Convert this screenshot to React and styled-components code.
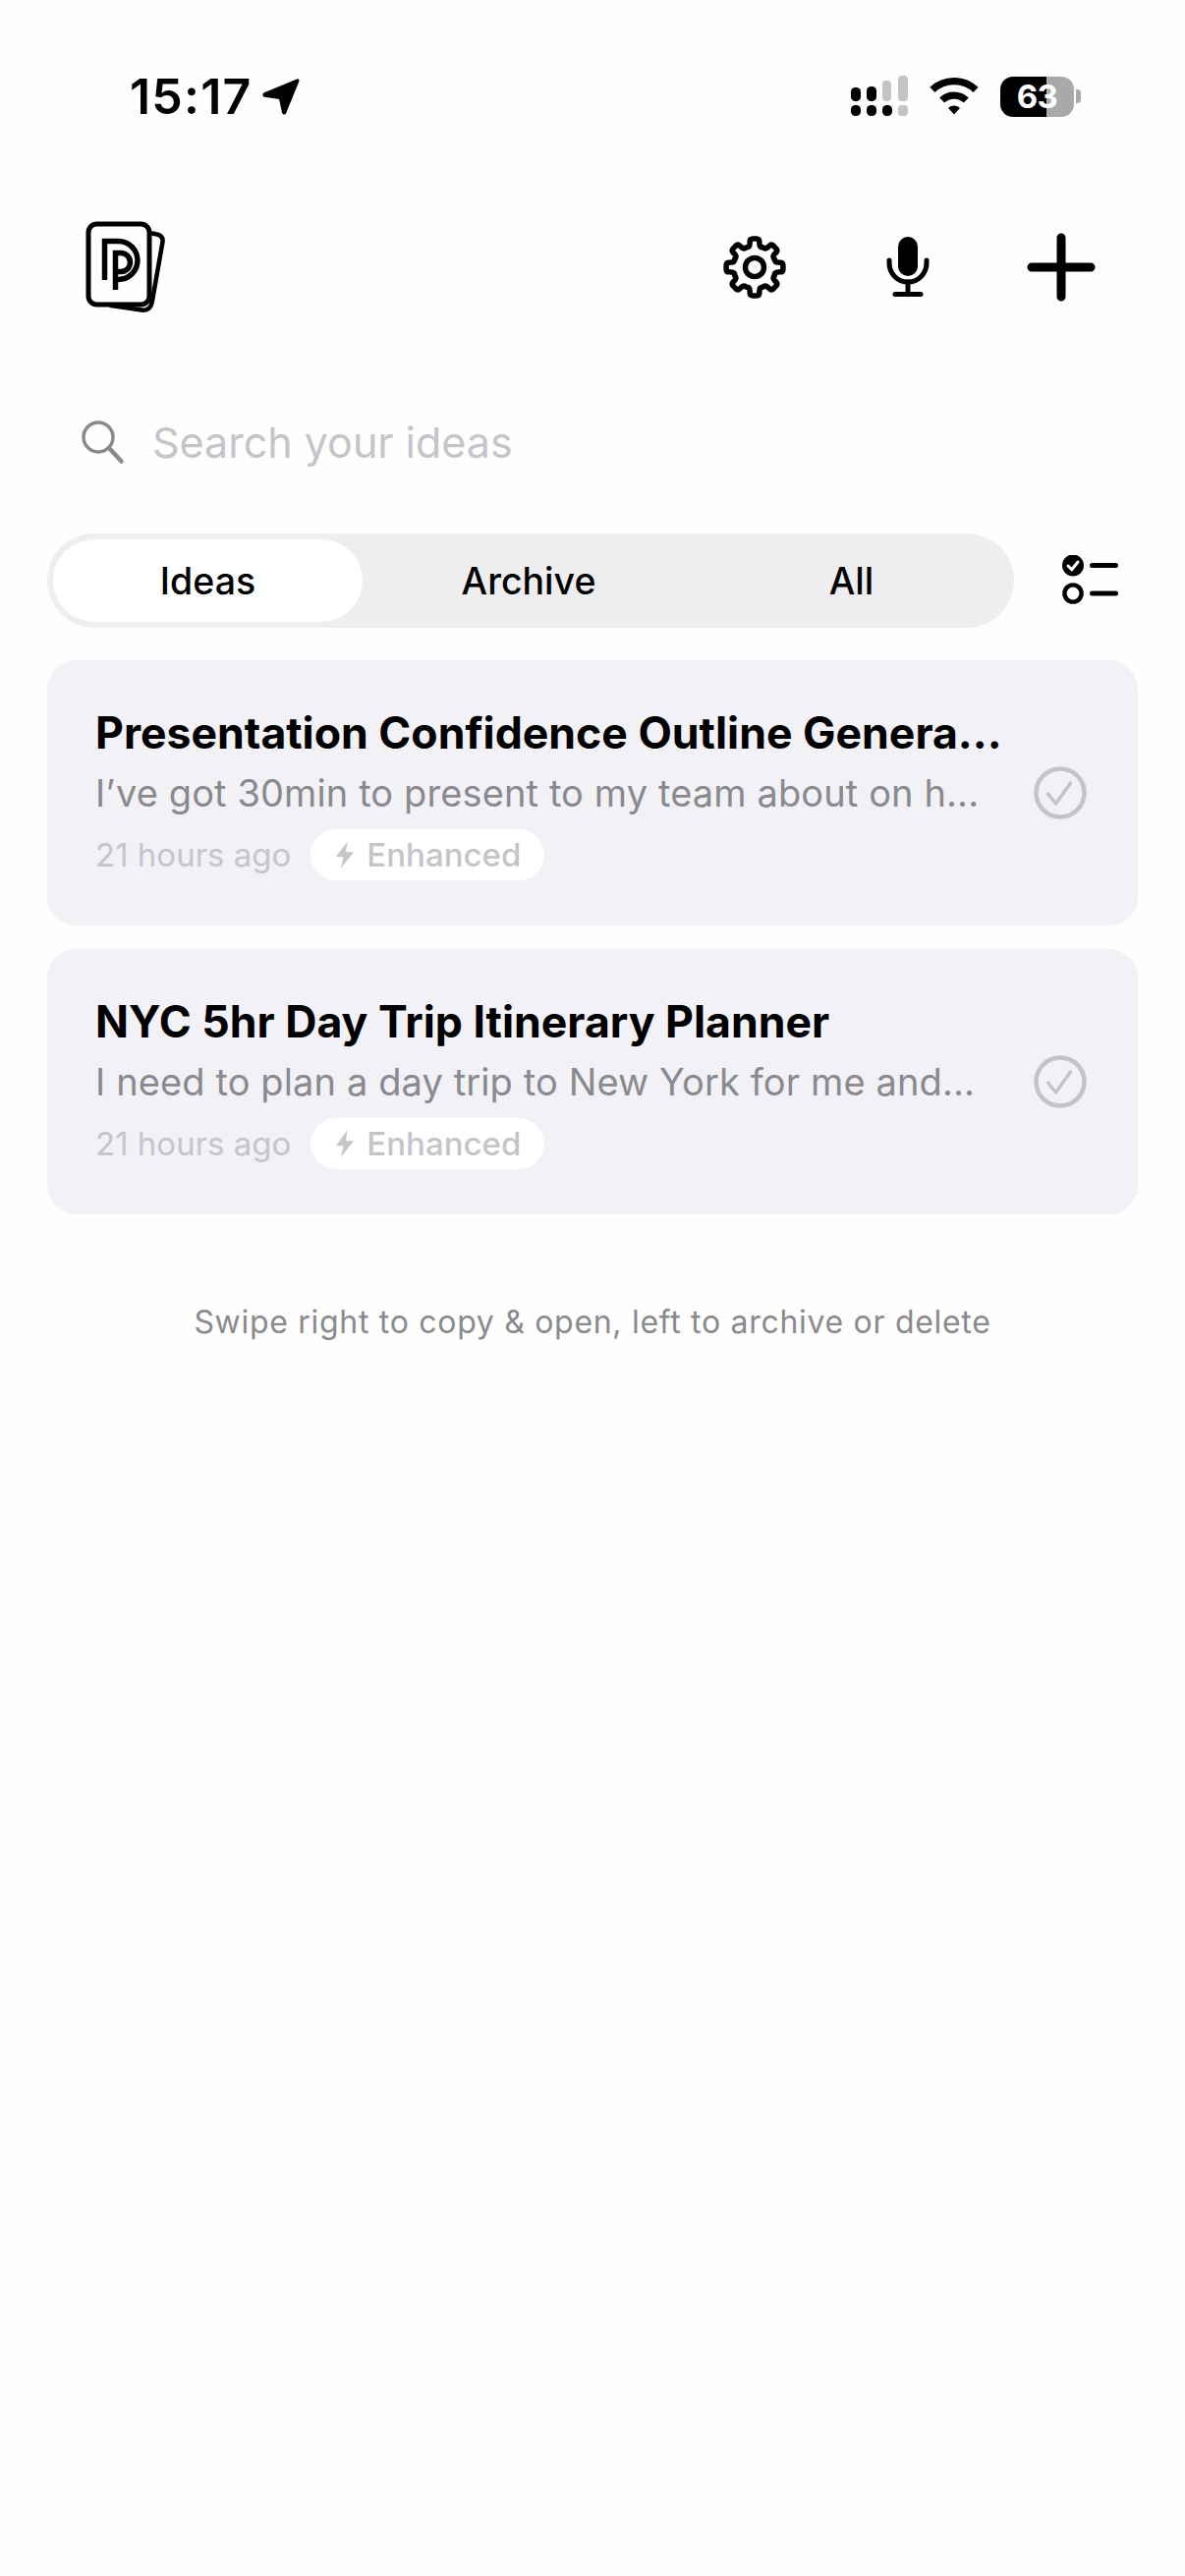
import React from 'react'
import styled, { createGlobalStyle } from 'styled-components'

const GlobalStyle = createGlobalStyle`
  html, body { margin: 0; padding: 0; background: #fff; }
  body { font-family: Inter, "Liberation Sans", sans-serif; -webkit-font-smoothing: antialiased; }
`

const Page = styled.div`
  width: 1206px;
  height: 2622px;
  background: #fefefe;
  overflow: hidden;
  display: flex;
  flex-direction: column;
`

const StatusBar = styled.div`
  height: 78px;
  padding: 59px 106px 0 132px;
  display: flex;
  align-items: center;
  justify-content: space-between;
`
const TimeGroup = styled.div`
  display: flex;
  align-items: center;
  gap: 10px;
`
const Time = styled.span`
  font-size: 50px;
  line-height: 60px;
  font-weight: 600;
  letter-spacing: 1.2px;
  color: #000;
`
const StatusIcons = styled.div`
  display: flex;
  align-items: center;
  gap: 22px;
`
const Battery = styled.div`
  width: 75px;
  height: 41px;
  border-radius: 13px;
  overflow: hidden;
  background: linear-gradient(90deg, #000 0 63%, #a9a9a9 63% 100%);
  display: flex;
  align-items: center;
  justify-content: center;
  color: #fff;
  font-size: 33px;
  font-weight: 700;
  letter-spacing: -0.5px;
`
const BatteryWrap = styled.div`
  display: flex;
  align-items: center;
  gap: 2px;
`
const BatteryCap = styled.div`
  width: 5px;
  height: 14px;
  border-radius: 0 4px 4px 0;
  background: #a9a9a9;
`

const Header = styled.div`
  margin-top: 87px;
  height: 96px;
  padding: 0 91px 0 87px;
  display: flex;
  align-items: center;
`
const HeaderActions = styled.div`
  margin-left: auto;
  display: flex;
  align-items: center;
  gap: 90px;
`
const IconSlot = styled.div`
  width: ${p => p.$w}px;
  height: 72px;
  display: flex;
  align-items: center;
  justify-content: center;
`

const SearchRow = styled.div`
  margin-top: 98px;
  height: 64px;
  padding-left: 82px;
  display: flex;
  align-items: center;
  gap: 27px;
`
const SearchText = styled.div`
  font-size: 43px;
  line-height: 64px;
  color: #c5c5c9;
`

const FilterRow = styled.div`
  margin-top: 61px;
  padding: 0 67px 0 48px;
  display: flex;
  align-items: center;
  justify-content: space-between;
`
const Segments = styled.div`
  width: 984px;
  height: 96px;
  box-sizing: border-box;
  padding: 6px;
  border-radius: 48px;
  background: #eeeef0;
  display: grid;
  grid-template-columns: 315px 338px 1fr;
`
const Segment = styled.div`
  border-radius: 42px;
  background: ${p => (p.$active ? '#fff' : 'transparent')};
  display: flex;
  align-items: center;
  justify-content: center;
  font-size: 37.5px;
  font-weight: 500;
  color: #000;
`

const List = styled.div`
  margin: 33px 48px 0;
  display: flex;
  flex-direction: column;
  gap: 24px;
`
const Card = styled.div`
  height: 270px;
  box-sizing: border-box;
  padding: 47px 52px 0 49px;
  border-radius: 30px;
  background: #f1f1f6;
  box-shadow: 0 0 2px rgba(0, 0, 0, 0.04);
  display: flex;
  align-items: flex-start;
  justify-content: space-between;
`
const CardBody = styled.div`
  width: 930px;
  display: flex;
  flex-direction: column;
`
const Title = styled.div`
  font-size: 44.6px;
  line-height: 54px;
  font-weight: 700;
  color: #000;
  white-space: nowrap;
`
const Preview = styled.div`
  margin-top: 7px;
  font-size: 38px;
  line-height: 54px;
  letter-spacing: 0.12px;
  color: #8a8a8e;
  white-space: nowrap;
`
const Meta = styled.div`
  margin-top: 10px;
  display: flex;
  align-items: center;
  gap: 20px;
`
const Ago = styled.span`
  font-size: 33px;
  line-height: 52px;
  color: #c5c5c9;
`
const Badge = styled.span`
  height: 52px;
  padding: 0 24px 0 25px;
  border-radius: 26px;
  background: #fff;
  display: inline-flex;
  align-items: center;
  gap: 12px;
  font-size: 33px;
  font-weight: 500;
  color: #c5c5c9;
`
const Check = styled.div`
  margin-top: 61px;
  display: flex;
`
const Hint = styled.div`
  margin-top: 88px;
  text-align: center;
  font-size: 32px;
  line-height: 44px;
  letter-spacing: 0.7px;
  color: #8a8a8e;
`

const LocationArrow = () => (
  <svg width="40" height="42" viewBox="0 0 42 42">
    <path d="M38 2.500c1.600-.6 2.900.7 2.300 2.400L26.500 38.800c-1 2.500-3.900 2.200-4.500-.4l-3-14.200-15.400-2.500C1 21 .7 18 3 17z" fill="#000" />
  </svg>
)

const Signal = () => (
  <svg width="58" height="42" viewBox="0 0 58 42">
    <g fill="#000">
      <rect x="0" y="12" width="10" height="14" rx="4.500" />
      <rect x="16" y="11" width="10" height="15" rx="4.500" />
      <rect x="0" y="30" width="10" height="11" rx="4.500" />
      <rect x="16" y="30" width="10" height="11" rx="4.500" />
      <rect x="32" y="30" width="10" height="11" rx="4.500" />
    </g>
    <g fill="#c4c4c4">
      <rect x="32" y="5" width="9" height="21" rx="4" />
      <rect x="48" y="0" width="10" height="26" rx="4" />
      <rect x="48" y="30" width="10" height="11" rx="4" />
    </g>
  </svg>
)

const Wifi = () => (
  <svg width="50" height="38" viewBox="0 0 50 38">
    <path d="M25 0c9.500 0 18.200 3.700 24.600 9.800l-5 5.300A28 28 0 0 0 25 7.300 28 28 0 0 0 5.400 15.100l-5-5.300A35.500 35.500 0 0 1 25 0z" fill="#000" />
    <path d="M25 14.500c5.700 0 10.900 2.200 14.800 5.900l-5 5.200A14 14 0 0 0 25 21.700a14 14 0 0 0-9.800 3.900l-5-5.200A21.300 21.300 0 0 1 25 14.500z" fill="#000" />
    <path d="M25 28.500c2.300 0 4.400.9 6 2.400L25 37.500l-6-6.600a8.700 8.700 0 0 1 6-2.400z" fill="#000" />
  </svg>
)

const Logo = () => (
  <svg width="82" height="94" viewBox="0 0 82 94" fill="none" stroke="#000">
    <path d="M68 12.500l3.500 .7c5 .8 7.500 3.500 7 8L68 81c-1 7-4.500 10.500-11 9.500L26 86" strokeWidth="4.500" strokeLinecap="round" />
    <rect x="3" y="3" width="62" height="82" rx="8.500" strokeWidth="5" />
    <path d="M19.500 18V60M17 20.500H33.500a19.500 19.500 0 0 1 0 39H31" strokeWidth="5.500" />
    <path d="M30.500 70V32.500H36a9.500 9.500 0 0 1 0 19H30.500" strokeWidth="5.500" />
  </svg>
)

// eight blunt teeth, one pointing straight up, valleys curved
const gearPath = () => {
  const pt = (r, deg) => {
    const a = ((deg - 90) * Math.PI) / 180
    return `${(33 + r * Math.cos(a)).toFixed(2)} ${(33 + r * Math.sin(a)).toFixed(2)}`
  }
  let d = `M${pt(22, -22.5)}`
  for (let i = 0; i < 8; i++) {
    const c = i * 45
    d += `Q${pt(20.5, c - 14)} ${pt(24.5, c - 11.5)}`
    d += `L${pt(26.5, c - 10.5)}Q${pt(29, c - 9.5)} ${pt(29, c - 5)}`
    d += `L${pt(29, c + 5)}Q${pt(29, c + 9.5)} ${pt(26.5, c + 10.5)}`
    d += `L${pt(24.5, c + 11.5)}Q${pt(20.5, c + 14)} ${pt(22, c + 22.5)}`
  }
  return d + 'Z'
}

const Gear = () => (
  <svg width="66" height="66" viewBox="0 0 66 66" fill="none" stroke="#000" strokeWidth="5.500" strokeLinejoin="round">
    <circle cx="33" cy="33" r="9.500" />
    <path d={gearPath()} />
  </svg>
)

const Mic = () => (
  <svg width="44" height="62" viewBox="0 0 44 62" fill="none" stroke="#000" strokeLinecap="round">
    <rect x="12" y="0" width="20" height="40" rx="10" fill="#000" stroke="none" />
    <path d="M3 24v3a19 19 0 0 0 38 0v-3" strokeWidth="5" />
    <path d="M22 46v12M9 58.500h26" strokeWidth="5" />
  </svg>
)

const Plus = () => (
  <svg width="70" height="70" viewBox="0 0 70 70">
    <path d="M35 5v60M5 35h60" stroke="#000" strokeWidth="9" strokeLinecap="round" />
  </svg>
)

const SearchIcon = () => (
  <svg width="46" height="46" viewBox="0 0 46 46" fill="none" stroke="#8a8a8e" strokeLinecap="round">
    <circle cx="18" cy="18" r="15" strokeWidth="3.500" />
    <path d="M29 29l12.500 13.500" strokeWidth="4.500" />
  </svg>
)

const ListCheck = () => (
  <svg width="60" height="52" viewBox="0 0 60 52">
    <circle cx="13" cy="10.500" r="11" fill="#000" />
    <path d="M8 11l3.800 3.800L18 7" fill="none" stroke="#fff" strokeWidth="3" strokeLinecap="round" strokeLinejoin="round" />
    <circle cx="13" cy="39" r="8.600" fill="none" stroke="#000" strokeWidth="4.400" />
    <path d="M32.500 10.500h24M32.500 39h24" stroke="#000" strokeWidth="5" strokeLinecap="round" />
  </svg>
)

const Bolt = () => (
  <svg width="20" height="30" viewBox="0 0 22 30">
    <path d="M14 0L1 17.500h8.500L6.500 30 21 12h-9z" fill="#c5c5c9" />
  </svg>
)

const CheckCircle = () => (
  <svg width="54" height="54" viewBox="0 0 54 54" fill="none" stroke="#c4c4c8">
    <circle cx="27" cy="27" r="24.500" strokeWidth="4.500" />
    <path d="M14.500 28l8 10 15-21" strokeWidth="3.500" strokeLinecap="round" strokeLinejoin="round" />
  </svg>
)

const ideas = [
  {
    title: 'Presentation Confidence Outline Genera...',
    preview: 'I’ve got 30min to present to my team about on h...',
  },
  {
    title: 'NYC 5hr Day Trip Itinerary Planner',
    preview: 'I need to plan a day trip to New York for me and...',
  },
]

export default function App() {
  return (
    <Page>
      <GlobalStyle />
      <StatusBar>
        <TimeGroup>
          <Time>15:17</Time>
          <LocationArrow />
        </TimeGroup>
        <StatusIcons>
          <Signal />
          <Wifi />
          <BatteryWrap>
            <Battery>63</Battery>
            <BatteryCap />
          </BatteryWrap>
        </StatusIcons>
      </StatusBar>

      <Header>
        <Logo />
        <HeaderActions>
          <IconSlot $w={70}><Gear /></IconSlot>
          <IconSlot $w={62}><Mic /></IconSlot>
          <IconSlot $w={70}><Plus /></IconSlot>
        </HeaderActions>
      </Header>

      <SearchRow>
        <SearchIcon />
        <SearchText>Search your ideas</SearchText>
      </SearchRow>

      <FilterRow>
        <Segments>
          <Segment $active>Ideas</Segment>
          <Segment>Archive</Segment>
          <Segment>All</Segment>
        </Segments>
        <ListCheck />
      </FilterRow>

      <List>
        {ideas.map(idea => (
          <Card key={idea.title}>
            <CardBody>
              <Title>{idea.title}</Title>
              <Preview>{idea.preview}</Preview>
              <Meta>
                <Ago>21 hours ago</Ago>
                <Badge><Bolt />Enhanced</Badge>
              </Meta>
            </CardBody>
            <Check><CheckCircle /></Check>
          </Card>
        ))}
      </List>

      <Hint>Swipe right to copy &amp; open, left to archive or delete</Hint>
    </Page>
  )
}
